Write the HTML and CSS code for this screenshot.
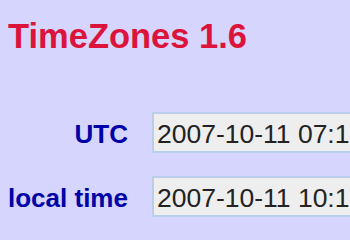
FILE: index.html
```html
<!DOCTYPE html>
<html lang="en">
<head>
    <meta charset="UTF-8">
    <title>TimeZones 1.6</title>
    <link rel="stylesheet" href="styles.css">
</head>
<body>

<main>
    <h1>TimeZones 1.6</h1>

    <div class="zones">
        <label for="utc">UTC</label>
        <input type="text" id="utc" value="2007-10-11 07:14:25">

        <label for="local">local time</label>
        <input type="text" id="local" value="2007-10-11 10:14:25">
    </div>
</main>

</body>
</html>
```

FILE: styles.css
```css
html, body {
    overflow: hidden;
}
body {
    margin: 0;
    padding: 0;
    background-color: #d5d5fd;
    font-family: 'Liberation Sans', Arial, sans-serif;
}
main {
    padding: 16px 8px;
}
h1 {
    margin: 0 0 56px;
    font-size: 34.5px;
    line-height: 40px;
    font-weight: bold;
    color: #dc143c;
    white-space: nowrap;
}
.zones {
    display: grid;
    grid-template-columns: max-content max-content;
    column-gap: 24px;
    row-gap: 23px;
    align-items: baseline;
}
.zones label {
    text-align: right;
    white-space: nowrap;
    font-size: 26px;
    font-weight: bold;
    color: #0000a8;
}
.zones input {
    box-sizing: border-box;
    width: 260px;
    height: 41px;
    margin: 0;
    padding: 4px 3px 0;
    border: 2px solid #b9cfe8;
    background-color: #eeeeee;
    color: #222;
    font-family: 'Liberation Sans', Arial, sans-serif;
    font-size: 26.5px;
    outline: none;
}
```
